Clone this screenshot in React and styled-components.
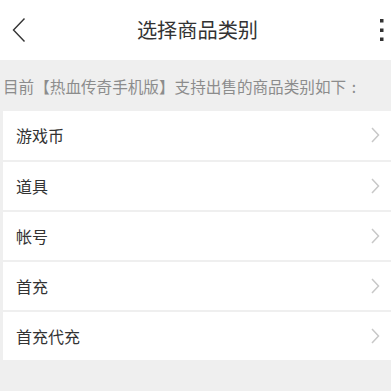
import React from "react"
import styled, { createGlobalStyle } from "styled-components"

const GlobalStyle = createGlobalStyle`
    html, body {
        margin: 0;
        padding: 0;
        background: #efefef;
        font-family: "Noto Sans CJK SC", "Noto Sans", sans-serif;
    }
`

const Page = styled.div`
    width: 391px;
    height: 391px;
    background: #efefef;
    overflow: hidden;
`

const Header = styled.div`
    height: 60px;
    background: #fff;
    display: grid;
    grid-template-columns: 1fr auto 1fr;
    align-items: center;
    padding: 0 6px 0 12px;
    box-sizing: border-box;
`

const Title = styled.div`
    font-size: 20.2px;
    color: #333;
    line-height: 1;
    margin-right: 2px;
`

const IconBox = styled.div`
    height: 26px;
    display: flex;
    align-items: center;
    justify-content: ${(p) => (p.end ? "flex-end" : "flex-start")};
`

const Notice = styled.div`
    height: 51px;
    display: flex;
    align-items: center;
    padding-left: 3px;
    font-size: 15.6px;
    color: #8c8c8c;
    white-space: nowrap;
`

const Colon = styled.span`
    display: inline-block;
    width: 1em;
    text-align: center;
`

const List = styled.div`
    margin-left: 3px;
    background: #fff;
`

const Row = styled.div`
    height: ${(p) => (p.first ? 49 : 50)}px;
    box-sizing: border-box;
    display: flex;
    align-items: center;
    justify-content: space-between;
    padding: 0 11px 1px 13px;
    border-top: ${(p) => (p.first ? "none" : "2px solid #efefef")};
    font-size: 16px;
    color: #333;
`

const Back = () => (
    <svg width="14" height="26" viewBox="0 0 14 26">
        <path d="M12.5 1.5 L1.5 13 L12.5 24.5" fill="none" stroke="#333" strokeWidth="1.4" />
    </svg>
)

const Dots = () => (
    <svg width="6" height="24" viewBox="0 0 6 24">
        <rect x="1" y="1" width="3.5" height="3.5" fill="#333" />
        <rect x="1" y="10.5" width="3.5" height="3.5" fill="#333" />
        <rect x="1" y="19.5" width="3.5" height="3.5" fill="#333" />
    </svg>
)

const Arrow = () => (
    <svg width="9" height="16" viewBox="0 0 9 16">
        <path d="M1 1 L7.5 8 L1 15" fill="none" stroke="#c8c8c8" strokeWidth="1.5" />
    </svg>
)

const items = ["游戏币", "道具", "帐号", "首充", "首充代充"]

const App = () => {
    return (
        <Page>
            <GlobalStyle />
            <Header>
                <IconBox><Back /></IconBox>
                <Title>选择商品类别</Title>
                <IconBox end><Dots /></IconBox>
            </Header>
            <Notice>目前【热血传奇手机版】支持出售的商品类别如下<Colon>:</Colon></Notice>
            <List>
                {items.map((name, i) => (
                    <Row key={name} first={i === 0}>
                        <span>{name}</span>
                        <Arrow />
                    </Row>
                ))}
            </List>
        </Page>
    )
}

export default App
